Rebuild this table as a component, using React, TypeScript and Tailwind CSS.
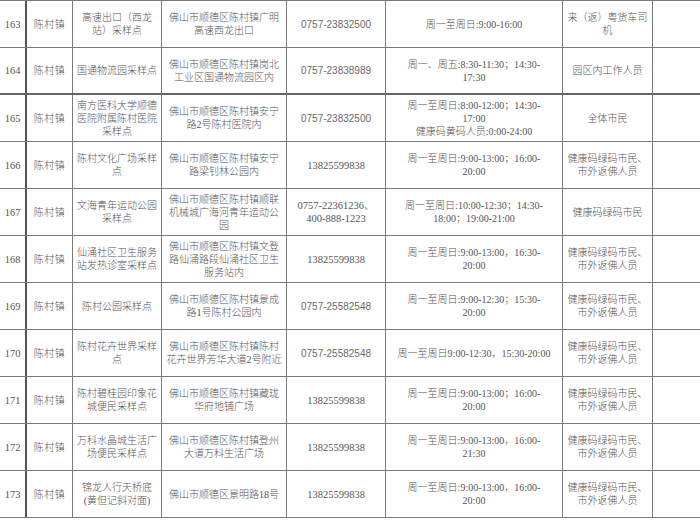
import React from "react";

type Row = {
  no: string;
  town: string;
  site: string[];
  addr: string[];
  phone: string[];
  phoneSans?: boolean;
  time: string[];
  who: string[];
  thick?: boolean;
};

const GREEN = ["健康码绿码市民、", "市外返佛人员"];

const rows: Row[] = [
  {
    no: "163",
    town: "陈村镇",
    site: ["高速出口（西龙", "站）采样点"],
    addr: ["佛山市顺德区陈村镇广明", "高速西龙出口"],
    phone: ["0757-23832500"],
    phoneSans: true,
    time: ["周一至周日:9:00-16:00"],
    who: ["来（返）粤货车司", "机"],
  },
  {
    no: "164",
    town: "陈村镇",
    site: ["国通物流园采样点"],
    addr: ["佛山市顺德区陈村镇岗北", "工业区国通物流园区内"],
    phone: ["0757-23838989"],
    phoneSans: true,
    time: ["周一、周五:8:30-11:30；14:30-", "17:30"],
    who: ["园区内工作人员"],
    thick: true,
  },
  {
    no: "165",
    town: "陈村镇",
    site: ["南方医科大学顺德", "医院附属陈村医院", "采样点"],
    addr: ["佛山市顺德区陈村镇安宁", "路2号陈村医院内"],
    phone: ["0757-23832500"],
    phoneSans: true,
    time: ["周一至周日:8:00-12:00；14:30-", "17:00", "健康码黄码人员:0:00-24:00"],
    who: ["全体市民"],
  },
  {
    no: "166",
    town: "陈村镇",
    site: ["陈村文化广场采样", "点"],
    addr: ["佛山市顺德区陈村镇安宁", "路梁钊林公园内"],
    phone: ["13825599838"],
    time: ["周一至周日:9:00-13:00；16:00-", "20:00"],
    who: GREEN,
  },
  {
    no: "167",
    town: "陈村镇",
    site: ["文海青年运动公园", "采样点"],
    addr: ["佛山市顺德区陈村镇顺联", "机械城广海河青年运动公", "园"],
    phone: ["0757-22361236、", "400-888-1223"],
    time: ["周一至周日:10:00-12:30；14:30-", "18:00；19:00-21:00"],
    who: ["健康码绿码市民"],
  },
  {
    no: "168",
    town: "陈村镇",
    site: ["仙涌社区卫生服务", "站发热诊室采样点"],
    addr: ["佛山市顺德区陈村镇文登", "路仙涌路段仙涌社区卫生", "服务站内"],
    phone: ["13825599838"],
    time: ["周一至周日:9:00-13:00，16:30-", "20:00"],
    who: GREEN,
  },
  {
    no: "169",
    town: "陈村镇",
    site: ["陈村公园采样点"],
    addr: ["佛山市顺德区陈村镇景成", "路1号陈村公园内"],
    phone: ["0757-25582548"],
    phoneSans: true,
    time: ["周一至周日:9:00-12:30；15:30-", "20:00"],
    who: GREEN,
  },
  {
    no: "170",
    town: "陈村镇",
    site: ["陈村花卉世界采样", "点"],
    addr: ["佛山市顺德区陈村镇陈村", "花卉世界芳华大道2号附近"],
    phone: ["0757-25582548"],
    phoneSans: true,
    time: ["周一至周日9:00-12:30，15:30-20:00"],
    who: GREEN,
  },
  {
    no: "171",
    town: "陈村镇",
    site: ["陈村碧桂园印象花", "城便民采样点"],
    addr: ["佛山市顺德区陈村镇藏珑", "华府地铺广场"],
    phone: ["13825599838"],
    time: ["周一至周日:9:00-13:00；16:00-", "20:00"],
    who: GREEN,
  },
  {
    no: "172",
    town: "陈村镇",
    site: ["万科水晶城生活广", "场便民采样点"],
    addr: ["佛山市顺德区陈村镇登州", "大道万科生活广场"],
    phone: ["13825599838"],
    time: ["周一至周日:9:00-13:00，16:00-", "21:30"],
    who: GREEN,
  },
  {
    no: "173",
    town: "陈村镇",
    site: ["锦龙人行天桥底", "(黄但记斜对面)"],
    addr: ["佛山市顺德区景明路18号"],
    phone: ["13825599838"],
    time: ["周一至周日:9:00-13:00，16:00-", "20:00"],
    who: GREEN,
  },
];

const Lines = ({ lines }: { lines: string[] }) => (
  <>
    {lines.map((l, i) => (
      <span key={i} className="block whitespace-nowrap">
        {l}
      </span>
    ))}
  </>
);

const cell =
  "flex flex-col items-center justify-center text-center border-r border-[#7a7a7a] overflow-hidden";

const App = () => {
  return (
    <div className="w-[700px] h-[520px] bg-white overflow-hidden font-['Liberation_Serif','Noto_Sans_CJK_SC',serif] font-light text-[10px] leading-[13px] text-[#555]">
      <div className="border-t border-[#7a7a7a]">
        {rows.map((r) => (
          <div
            key={r.no}
            className={
              r.thick
                ? "grid grid-cols-[27px_46px_89px_125px_99px_177px_90px_47px] h-[47px] border-b-2 border-[#666]"
                : "grid grid-cols-[27px_46px_89px_125px_99px_177px_90px_47px] h-[47px] border-b border-[#7a7a7a]"
            }
          >
            {/* ============= No. ============= */}
            <div className="flex items-center justify-center border-r-2 border-[#555] text-[10.5px]">
              {r.no}
            </div>
            <div className={cell}>
              <span className="tracking-[0.5px]">{r.town}</span>
            </div>
            <div className={cell}>
              <Lines lines={r.site} />
            </div>
            <div className={cell}>
              <Lines lines={r.addr} />
            </div>
            <div
              className={
                r.phoneSans
                  ? cell + " font-['Liberation_Sans','Noto_Sans_CJK_SC',sans-serif] text-[10px] text-[#6a6a6a]"
                  : cell + " text-[10.5px]"
              }
            >
              <Lines lines={r.phone} />
            </div>
            <div className={cell}>
              <Lines lines={r.time} />
            </div>
            <div className={cell}>
              <Lines lines={r.who} />
            </div>
            <div className="flex" />
          </div>
        ))}
      </div>
    </div>
  );
};

export default App;
